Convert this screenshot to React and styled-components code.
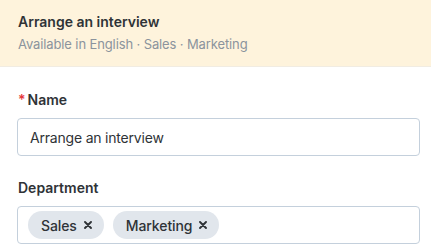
import React from "react";
import styled, { createGlobalStyle } from "styled-components";

const Global = createGlobalStyle`
  html, body { margin: 0; padding: 0; background: #ffffff; }
  body { font-family: Inter, "Noto Sans", sans-serif; -webkit-font-smoothing: antialiased; }
`;

const Page = styled.div`
  width: 431px;
  height: 250px;
  overflow: hidden;
  background: #fff;
`;

const Header = styled.div`
  background: #fef3dc;
  border-bottom: 1px solid #f1ece2;
  padding: 12px 18px 0;
  height: 54px;
  display: flex;
  flex-direction: column;
  gap: 3px;
`;

const Title = styled.div`
  font-size: 14px;
  line-height: 20px;
  font-weight: 600;
  color: #2f3337;
`;

const Subtitle = styled.div`
  font-size: 13px;
  letter-spacing: -0.12px;
  line-height: 18px;
  color: #8b939d;
`;

const Form = styled.div`
  padding: 23px 11px 0 17px;
  display: flex;
  flex-direction: column;
  gap: 22px;
`;

const Field = styled.div`
  display: flex;
  flex-direction: column;
  gap: 8px;
`;

const Label = styled.label`
  font-size: 14px;
  line-height: 20px;
  font-weight: 600;
  color: #2f3337;
  padding-left: 1px;
  display: flex;
  align-items: baseline;
`;

const Required = styled.span`
  color: #e5383b;
  margin-right: 2px;
  font-weight: 600;
`;

const Input = styled.div`
  height: 38px;
  box-sizing: border-box;
  border: 1px solid #c4d0dc;
  border-radius: 4px;
  padding: 0 12px 0 12px;
  display: flex;
  align-items: center;
  font-size: 14px;
  letter-spacing: -0.2px;
  color: #2f3337;
`;

const TagBox = styled(Input)`
  padding: 0 10px;
  gap: 9px;
  letter-spacing: -0.1px;
`;

const Chip = styled.span`
  height: 28px;
  border-radius: 14px;
  background: #e1e6ec;
  display: inline-flex;
  align-items: center;
  padding: 0 12px 0 13px;
  gap: 7px;
  font-size: 14px;
  font-weight: 500;
  color: #2f3337;
`;

const Close = ({ size = 8 }) => (
  <svg width={size} height={size} viewBox="0 0 8 8">
    <path d="M1 1 L7 7 M7 1 L1 7" stroke="#2f3337" strokeWidth="1.9" strokeLinecap="round" />
  </svg>
);

export default function App() {
  return (
    <Page>
      <Global />
      <Header>
        <Title>Arrange an interview</Title>
        <Subtitle>Available in English · Sales · Marketing</Subtitle>
      </Header>
      <Form>
        <Field>
          <Label><Required>*</Required>Name</Label>
          <Input>Arrange an interview</Input>
        </Field>
        <Field>
          <Label>Department</Label>
          <TagBox>
            <Chip>Sales<Close /></Chip>
            <Chip>Marketing<Close /></Chip>
          </TagBox>
        </Field>
      </Form>
    </Page>
  );
}
